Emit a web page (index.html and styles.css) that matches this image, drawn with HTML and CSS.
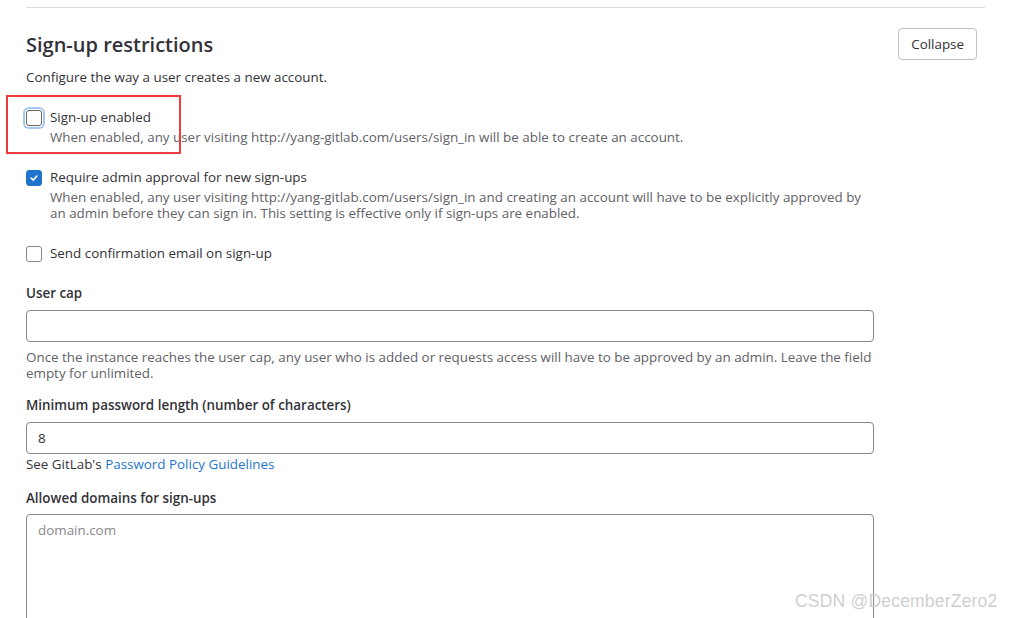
FILE: index.html
```html
<!DOCTYPE html>
<html>
<head>
<meta charset="utf-8">
<link rel="stylesheet" href="styles.css">
</head>
<body>
<div class="page">
  <section class="settings">
    <div class="head">
      <h2 class="title">Sign-up restrictions</h2>
      <button class="btn">Collapse</button>
    </div>
    <p class="intro">Configure the way a user creates a new account.</p>

    <div class="check focused">
      <span class="box"></span>
      <div class="ctext">
        <div class="clabel">Sign-up enabled</div>
        <div class="help">When enabled, any user visiting http://yang-gitlab.com/users/sign_in will be able to create an account.</div>
      </div>
      <span class="highlight"></span>
    </div>

    <div class="check">
      <span class="box checked"><svg width="10" height="10" viewBox="0 0 10 10"><path d="M2.2 5.2 L4.2 7.1 L7.9 3" fill="none" stroke="#fff" stroke-width="1.6" stroke-linecap="round" stroke-linejoin="round"/></svg></span>
      <div class="ctext">
        <div class="clabel">Require admin approval for new sign-ups</div>
        <div class="help">When enabled, any user visiting http://yang-gitlab.com/users/sign_in and creating an account will have to be explicitly approved by an admin before they can sign in. This setting is effective only if sign-ups are enabled.</div>
      </div>
    </div>

    <div class="check">
      <span class="box"></span>
      <div class="ctext">
        <div class="clabel">Send confirmation email on sign-up</div>
      </div>
    </div>

    <div class="field">
      <label class="flabel">User cap</label>
      <div class="input"></div>
      <div class="help fhelp">Once the instance reaches the user cap, any user who is added or requests access will have to be approved by an admin. Leave the field empty for unlimited.</div>
    </div>

    <div class="field">
      <label class="flabel">Minimum password length (number of characters)</label>
      <div class="input">8</div>
      <div class="see">See GitLab's <a class="link">Password Policy Guidelines</a></div>
    </div>

    <div class="field">
      <label class="flabel">Allowed domains for sign-ups</label>
      <div class="textarea">domain.com</div>
    </div>
  </section>
</div>
<div class="watermark">CSDN @DecemberZero2</div>
</body>
</html>
```
FILE: styles.css
```css
html, body { margin: 0; padding: 0; background: #fff; overflow: hidden; }
body { font-family: "Open Sans", "Noto Sans", Arial, sans-serif; color: #333238; font-size: 13.4px; }
.page { padding: 0 26px 0 26px; height: 618px; overflow: hidden; }
.settings { border-top: 1px solid #dcdcde; margin-top: 7px; padding-right: 1px; }
.head { display: flex; justify-content: space-between; align-items: flex-start; padding-top: 20px; }
.title { margin: 3px 0 0 0; font-size: 20px; font-weight: 600; color: #333238; line-height: 28px; }
.btn { margin-right: 7px; height: 32px; padding: 0 12px; background: #fff; border: 1px solid #bfbfc3; border-radius: 4px; font-family: inherit; font-size: 13.4px; color: #333238; }
.intro { margin: 7px 0 0 0; line-height: 20px; }
.check { position: relative; display: flex; gap: 8px; margin-top: 22px; }
.check + .check { margin-top: 24px; }
.box { flex: none; width: 14px; height: 14px; border: 1px solid #89888d; border-radius: 3px; margin-top: 1px; box-sizing: content-box; display: flex; align-items: center; justify-content: center; background: #fff; }
.focused .box { box-shadow: 0 0 0 1px #fff, 0 0 0 3px #a4c7f1; border-color: #666; }
.box.checked { background: #1f75cb; border-color: #1f75cb; }
.clabel { line-height: 17px; }
.help { color: #626168; line-height: 16px; margin-top: 3px; max-width: 818px; }
.highlight { position: absolute; left: -20px; top: -14px; width: 171px; height: 55px; border: 2px solid #ee3a3a; }
.field { margin-top: 23px; }
.field + .field { margin-top: 16px; }
.flabel { display: block; font-weight: 600; line-height: 17px; }
.input { margin-top: 8px; height: 30px; border: 1px solid #89888d; border-radius: 4px; padding: 0 11px; box-sizing: content-box; line-height: 30px; width: 824px; }
.fhelp { margin-top: 7px; max-width: 848px; }
.see { margin-top: 0; line-height: 20px; }
.link { color: #1f75cb; }
.textarea { margin-top: 7px; width: 824px; height: 150px; border: 1px solid #89888d; border-radius: 4px; padding: 6px 11px; color: #89888d; box-sizing: content-box; }
.watermark { position: absolute; left: 795px; top: 591px; font-family: "Liberation Sans", Arial, sans-serif; font-size: 17.5px; color: #cfcfcf; letter-spacing: 0.2px; }
```
